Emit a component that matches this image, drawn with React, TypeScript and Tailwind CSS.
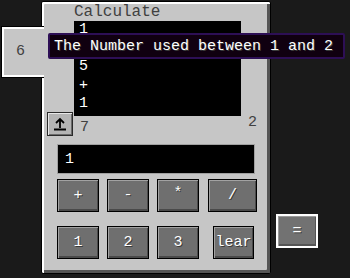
import React from "react";

const font = { fontFamily: '"Liberation Mono", "DejaVu Sans Mono", monospace' };

function McButton({
  label,
  w,
  className = "",
}: {
  label: string;
  w: string;
  className?: string;
}) {
  return (
    <div
      className={`${w} h-[33px] border border-black bg-[#6f6f6f] shadow-[inset_1px_1px_0_#a2a2a2,inset_-1px_-2px_0_#4a4a4a] flex items-center justify-center text-white text-[15px] leading-none [text-shadow:1px_1px_0_#3a3a3a] overflow-hidden ${className}`}
    >
      {label}
    </div>
  );
}

export default function App() {
  return (
    <div
      className="relative w-[350px] h-[278px] overflow-hidden bg-[#1a1a1a]"
      style={font}
    >
      <div className="flex items-start pt-[1px] pl-[1px]">
        {/* side tab */}
        <div className="relative z-10 mt-[25px] -mr-[3px] w-[43px] h-[52px] border-y border-l border-black bg-[#c6c6c6] shadow-[inset_2px_2px_0_#ffffff,inset_0_-2px_0_#ffffff] flex items-center pl-[14px] text-[15px] text-[#404040]">
          6
        </div>

        {/* main panel */}
        <div className="w-[230px] h-[273px] border border-black rounded-[2px] bg-[#c6c6c6] shadow-[inset_2px_2px_0_#ffffff,inset_-3px_-3px_0_#555555] flex flex-col">
          <div className="pl-[32px] pt-[3px] h-[19px] text-[16px] leading-[15px] text-[#404040]">
            Calculate
          </div>
          <div className="flex">
            <div className="w-[32px]" />
            <div className="w-[167px] h-[95px] bg-black pl-[5px] text-white text-[15px] leading-[18.5px] flex flex-col">
              <div>1</div>
              <div>&nbsp;</div>
              <div>5</div>
              <div>+</div>
              <div>1</div>
            </div>
          </div>
          <div className="flex items-start -mt-[4px] pl-[5px] h-[24px]">
            <div className="w-[26px] h-[24px] border border-[#2a2a2a] bg-[#b4b4b4] shadow-[inset_1px_1px_0_#e8e8e8,inset_-1px_-1px_0_#6a6a6a] flex items-center justify-center">
              <svg width="14" height="14" viewBox="0 0 14 14">
                <path
                  d="M7 2 L7 11 M3 6 L7 2 L11 6 M1 12.5 L13 12.5"
                  stroke="#000"
                  strokeWidth="1.8"
                  fill="none"
                />
              </svg>
            </div>
            <div className="ml-[7px] mt-[8px] text-[15px] leading-[15px] text-[#404040]">
              7
            </div>
            <div className="ml-[159px] mt-[3px] text-[15px] leading-[15px] text-[#404040]">
              2
            </div>
          </div>
          <div className="ml-[15px] mt-[8px] w-[198px] h-[30px] border border-[#a0a0a0] bg-black flex items-center pl-[7px] text-white text-[15px] leading-none">
            1
          </div>
          <div className="flex ml-[15px] mt-[5px]">
            <McButton label="+" w="w-[42px]" />
            <McButton label="-" w="w-[42px]" className="ml-[8px]" />
            <McButton label="*" w="w-[42px]" className="ml-[8px] items-start pt-[6px]" />
            <McButton label="/" w="w-[49px]" className="ml-[9px]" />
          </div>
          <div className="flex ml-[15px] mt-[14px]">
            <McButton label="1" w="w-[42px]" />
            <McButton label="2" w="w-[42px]" className="ml-[8px]" />
            <McButton label="3" w="w-[42px]" className="ml-[8px]" />
            <McButton label="lear" w="w-[41px]" className="ml-[14px]" />
          </div>
        </div>

        {/* equals button */}
        <div className="ml-[5px] mt-[213px] w-[42px] h-[34px] border-2 border-white bg-[#727272] shadow-[inset_1px_1px_0_#9a9a9a,inset_-1px_-2px_0_#555555] flex items-center justify-center text-white text-[15px] leading-none [text-shadow:1px_1px_0_#3a3a3a]">
          =
        </div>
      </div>

      {/* tooltip */}
      <div className="absolute left-[48px] top-[33px] w-[297px] h-[26px] bg-[#100010] border-2 border-[#2d0f55] rounded-[2px] flex items-center pl-[4px] text-white text-[15px] leading-none whitespace-nowrap [text-shadow:1px_1px_0_#3a3a3a]">
        The Number used between 1 and 2
      </div>
    </div>
  );
}
